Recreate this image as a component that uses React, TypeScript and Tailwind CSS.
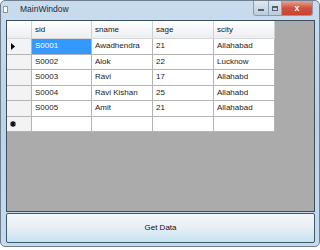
const rows = [
  { sid: "S0001", sname: "Awadhendra", sage: "21", scity: "Allahabad" },
  { sid: "S0002", sname: "Alok", sage: "22", scity: "Lucknow" },
  { sid: "S0003", sname: "Ravi", sage: "17", scity: "Allahabd" },
  { sid: "S0004", sname: "Ravi Kishan", sage: "25", scity: "Allahabd" },
  { sid: "S0005", sname: "Amit", sage: "21", scity: "Allahabad" },
];

const cols = ["sid", "sname", "sage", "scity"] as const;
const widths = ["w-[60px]", "w-[61px]", "w-[61px]", "w-[61px]"];

function TitleButtons() {
  return (
    <div className="flex h-[15px] self-start rounded-b-[3px] overflow-hidden border border-t-0 border-[#8b9cad]">
      <div className="w-[15px] bg-gradient-to-b from-[#dfe7f0] to-[#bccbdb] border-r border-[#8ea2b5] flex items-center justify-center">
        <div className="w-[6px] h-[2px] bg-[#52606e] mt-[3px]" />
      </div>
      <div className="w-[13px] bg-gradient-to-b from-[#dfe7f0] to-[#bccbdb] border-r border-[#8ea2b5] flex items-center justify-center">
        <div className="w-[6px] h-[5px] border border-[#52606e] border-t-2" />
      </div>
      <div className="w-[30px] bg-gradient-to-b from-[#e6a497] via-[#d0503f] to-[#c9442f] flex items-center justify-center">
        <span className="text-white text-[9px] font-bold leading-none [font-family:'Liberation_Sans',sans-serif]">x</span>
      </div>
    </div>
  );
}

export default function App() {
  return (
    <div className="w-[320px] h-[250px] bg-white">
      <div className="w-[320px] h-[247px] flex flex-col rounded-[5px] border border-[#6f7f8e] bg-gradient-to-b from-[#c9dcee] via-[#bcd3ea] to-[#c6dbee] [font-family:'Liberation_Sans',sans-serif] overflow-hidden">
        <div className="h-[19px] flex items-start pl-[2px] pr-[6px] shrink-0">
          <div className="mt-[5px] w-[5px] h-[7px] bg-white border border-[#8899aa]" />
          <span className="ml-[12px] mt-[4px] text-[8.5px] text-[#1e2a36] leading-none">MainWindow</span>
          <div className="flex-1" />
          <TitleButtons />
        </div>
        <div className="flex-1 flex flex-col pl-[5px] pr-[4px]">
          <div className="h-[192px] border border-[#38505f] bg-[#ababab] flex flex-col items-start">
            <div className="flex h-[18px] bg-gradient-to-b from-[#ffffff] to-[#eceef0] border-b border-[#d5d9dd]">
              <div className="w-[25px] border-r border-[#cdd1d5]" />
              {cols.map((c, i) => (
                <div
                  key={c}
                  className={`${widths[i]} border-r border-[#cdd1d5] flex items-center pl-[3px] text-[8px] text-[#1a1a1a]`}
                >
                  {c}
                </div>
              ))}
            </div>
            {rows.map((r, ri) => (
              <div key={r.sid} className="flex h-[15.5px] bg-white border-b border-[#b4b4b4]">
                <div className="w-[25px] bg-[#f3f3f3] border-r border-[#b4b4b4] flex items-center pl-[4px]">
                  {ri === 0 && (
                    <svg width="4" height="7" viewBox="0 0 4 7">
                      <path d="M0 0 L4 3.5 L0 7 Z" fill="#000" />
                    </svg>
                  )}
                </div>
                {cols.map((c, i) => (
                  <div
                    key={c}
                    className={`${widths[i]} border-r border-[#b4b4b4] flex items-center pl-[3px] text-[8px] ${
                      ri === 0 && i === 0 ? "bg-[#3399ff] text-white" : "text-[#1a1a1a]"
                    }`}
                  >
                    {r[c]}
                  </div>
                ))}
              </div>
            ))}
            <div className="flex h-[15px] bg-white border-b border-[#b4b4b4]">
              <div className="w-[25px] bg-[#f3f3f3] border-r border-[#b4b4b4] flex items-center pl-[3px]">
                <svg width="6" height="6" viewBox="0 0 6 6">
                  <path d="M3 0 V6 M0 3 H6 M0.8 0.8 L5.2 5.2 M5.2 0.8 L0.8 5.2" stroke="#000" strokeWidth="1.2" />
                </svg>
              </div>
              {cols.map((c, i) => (
                <div key={c} className={`${widths[i]} border-r border-[#b4b4b4]`} />
              ))}
            </div>
          </div>
          <button className="mt-[1px] h-[30px] rounded-[2px] border border-[#3c5a6a] bg-gradient-to-b from-[#f4f7fb] via-[#e8eef5] to-[#c5e2f2] text-[8px] text-[#111] flex items-center justify-center">
            Get Data
          </button>
        </div>
      </div>
    </div>
  );
}
